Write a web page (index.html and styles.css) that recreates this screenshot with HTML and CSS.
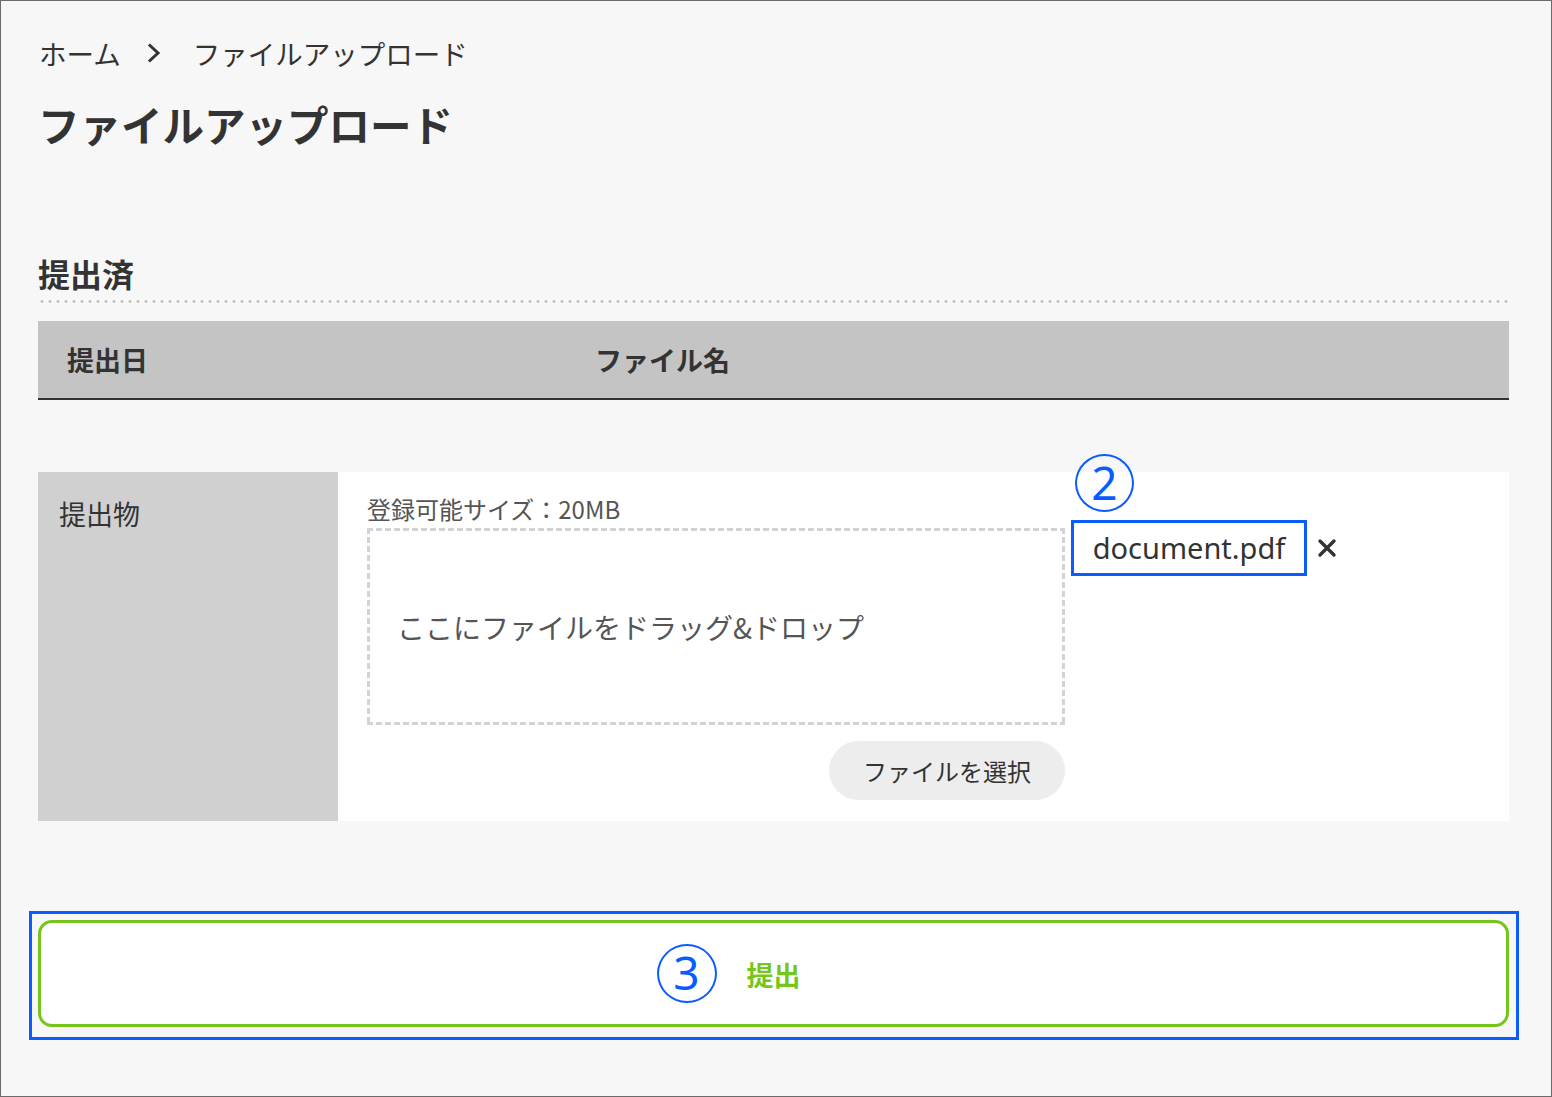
FILE: index.html
```html
<!DOCTYPE html>
<html lang="ja">
<head>
<meta charset="utf-8">
<title>ファイルアップロード</title>
<link rel="stylesheet" href="styles.css">
</head>
<body>
<div class="page">
  <nav class="breadcrumb">
    <span>ホーム</span>
    <svg class="chev" width="14" height="20" viewBox="0 0 14 20"><path d="M3 2.5 L11 10 L3 17.5" fill="none" stroke="#333" stroke-width="3" stroke-linecap="square"/></svg>
    <span>ファイルアップロード</span>
  </nav>
  <h1 class="title">ファイルアップロード</h1>

  <h2 class="section-title">提出済</h2>
  <div class="dots"></div>

  <div class="thead">
    <div class="th th-date">提出日</div>
    <div class="th th-name">ファイル名</div>
  </div>

  <div class="row">
    <div class="row-label">提出物</div>
    <div class="row-body">
      <div class="upload">
        <div class="size-note">登録可能サイズ：20MB</div>
        <div class="dropzone">ここにファイルをドラッグ&amp;ドロップ</div>
        <div class="select-wrap"><button class="select-btn">ファイルを選択</button></div>
      </div>
      <div class="file-area">
        <span class="mark mark-2">2</span>
        <div class="file-name">document.pdf</div>
        <svg class="remove" width="20" height="20" viewBox="0 0 20 20"><path d="M3 3 L17 17 M17 3 L3 17" stroke="#333" stroke-width="3.4" stroke-linecap="round"/></svg>
      </div>
    </div>
  </div>

  <div class="submit-wrap">
    <button class="submit"><span class="submit-text"><span class="mark mark-3">3</span>提出</span></button>
    <div class="annot-box"></div>
  </div>
</div>
</body>
</html>
```

FILE: styles.css
```css
* { box-sizing: border-box; }
html, body { margin: 0; padding: 0; }
body {
  font-family: "Noto Sans CJK JP", "Noto Sans", sans-serif;
  color: #333;
  background: #f7f7f7;
}
.page {
  width: 1552px;
  height: 1097px;
  border: 1px solid #6b6b6b;
  background: #f7f7f7;
  padding: 32px 42px 0 37px;
  overflow: hidden;
}
.breadcrumb {
  display: flex;
  align-items: center;
  font-size: 27.5px;
  line-height: 40px;
  padding-left: 1px;
  color: #333;
}
.chev { margin: 0 32px 0 26px; }
.title {
  margin: 23px 0 0 0;
  font-size: 41.5px;
  line-height: 56px;
  font-weight: 700;
  color: #333;
}
.section-title {
  margin: 100px 0 0 0;
  font-size: 32px;
  line-height: 42px;
  font-weight: 700;
  color: #333;
}
.dots {
  margin-top: 6px;
  height: 3px;
  background-image: radial-gradient(circle, #c4c4c4 1.4px, transparent 1.7px);
  background-size: 8px 3px;
  background-position: 0 0;
}
.thead {
  margin-top: 18px;
  height: 79px;
  background: #c4c4c4;
  border-bottom: 2px solid #333;
  display: flex;
  align-items: center;
}
.th {
  font-size: 27px;
  font-weight: 700;
  color: #333;
}
.th-date { width: 557px; padding-left: 29px; }
.row {
  margin-top: 72px;
  display: flex;
  background: #fff;
  height: 349px;
}
.row-label {
  width: 300px;
  background: #d0d0d0;
  padding: 22px 0 0 21px;
  font-size: 27px;
  line-height: 40px;
  color: #333;
}
.row-body {
  flex: 1;
  display: flex;
  padding: 19px 0 0 29px;
}
.upload { width: 698px; }
.size-note {
  font-size: 24px;
  line-height: 36px;
  color: #555;
}
.dropzone {
  margin-top: 1px;
  height: 197px;
  background:
    repeating-linear-gradient(90deg, #d0d3d8 0 6px, transparent 6px 9px) left top / 100% 3px no-repeat,
    repeating-linear-gradient(90deg, #d0d3d8 0 6px, transparent 6px 9px) left bottom / 100% 3px no-repeat,
    repeating-linear-gradient(180deg, #d0d3d8 0 6px, transparent 6px 9px) left top / 3px 100% no-repeat,
    repeating-linear-gradient(180deg, #d0d3d8 0 6px, transparent 6px 9px) right top / 3px 100% no-repeat;
  display: flex;
  align-items: center;
  padding-left: 30px;
  font-size: 28px;
  color: #555;
}
.select-wrap {
  display: flex;
  justify-content: flex-end;
  margin-top: 16px;
}
.select-btn {
  width: 236px;
  height: 59px;
  border: none;
  border-radius: 30px;
  background: #ededed;
  font-family: inherit;
  font-size: 24px;
  color: #333;
  padding: 0;
}
.file-area {
  position: relative;
  display: flex;
  align-items: center;
  align-self: flex-start;
  margin: 29px 0 0 6px;
}
.file-name {
  width: 236px;
  height: 56px;
  border: 3px solid #0a5cff;
  display: flex;
  align-items: center;
  justify-content: center;
  font-family: "Noto Sans", sans-serif;
  font-size: 29px;
  color: #333;
  padding-bottom: 2px;
}
.remove { margin-left: 10px; }
.mark {
  display: inline-flex;
  align-items: center;
  justify-content: center;
  border: 2px solid #0a5cff;
  border-radius: 50%;
  color: #0a5cff;
  font-family: "Noto Sans", sans-serif;
  font-weight: 400;
  line-height: 1;
}
.mark-2 {
  position: absolute;
  left: 4px;
  top: -66px;
  width: 59px;
  height: 58px;
  font-size: 46px;
  padding-bottom: 2px;
}
.submit-wrap {
  position: relative;
  margin-top: 99px;
}
.submit {
  width: 100%;
  height: 107px;
  border: 3px solid #76c51b;
  border-radius: 14px;
  background: #fff;
  display: flex;
  align-items: center;
  justify-content: center;
  font-family: inherit;
  padding: 0;
}
.submit-text {
  position: relative;
  font-size: 27px;
  font-weight: 700;
  color: #76c51b;
  margin-top: 2px;
}
.mark-3 {
  position: absolute;
  right: calc(100% + 30px);
  top: 50%;
  margin-top: -31px;
  width: 60px;
  height: 59px;
  font-size: 46px;
  padding-bottom: 2px;
}
.annot-box {
  position: absolute;
  left: -9px;
  right: -10px;
  top: -9px;
  bottom: -13px;
  border: 3px solid #0a5cff;
  pointer-events: none;
}
```
